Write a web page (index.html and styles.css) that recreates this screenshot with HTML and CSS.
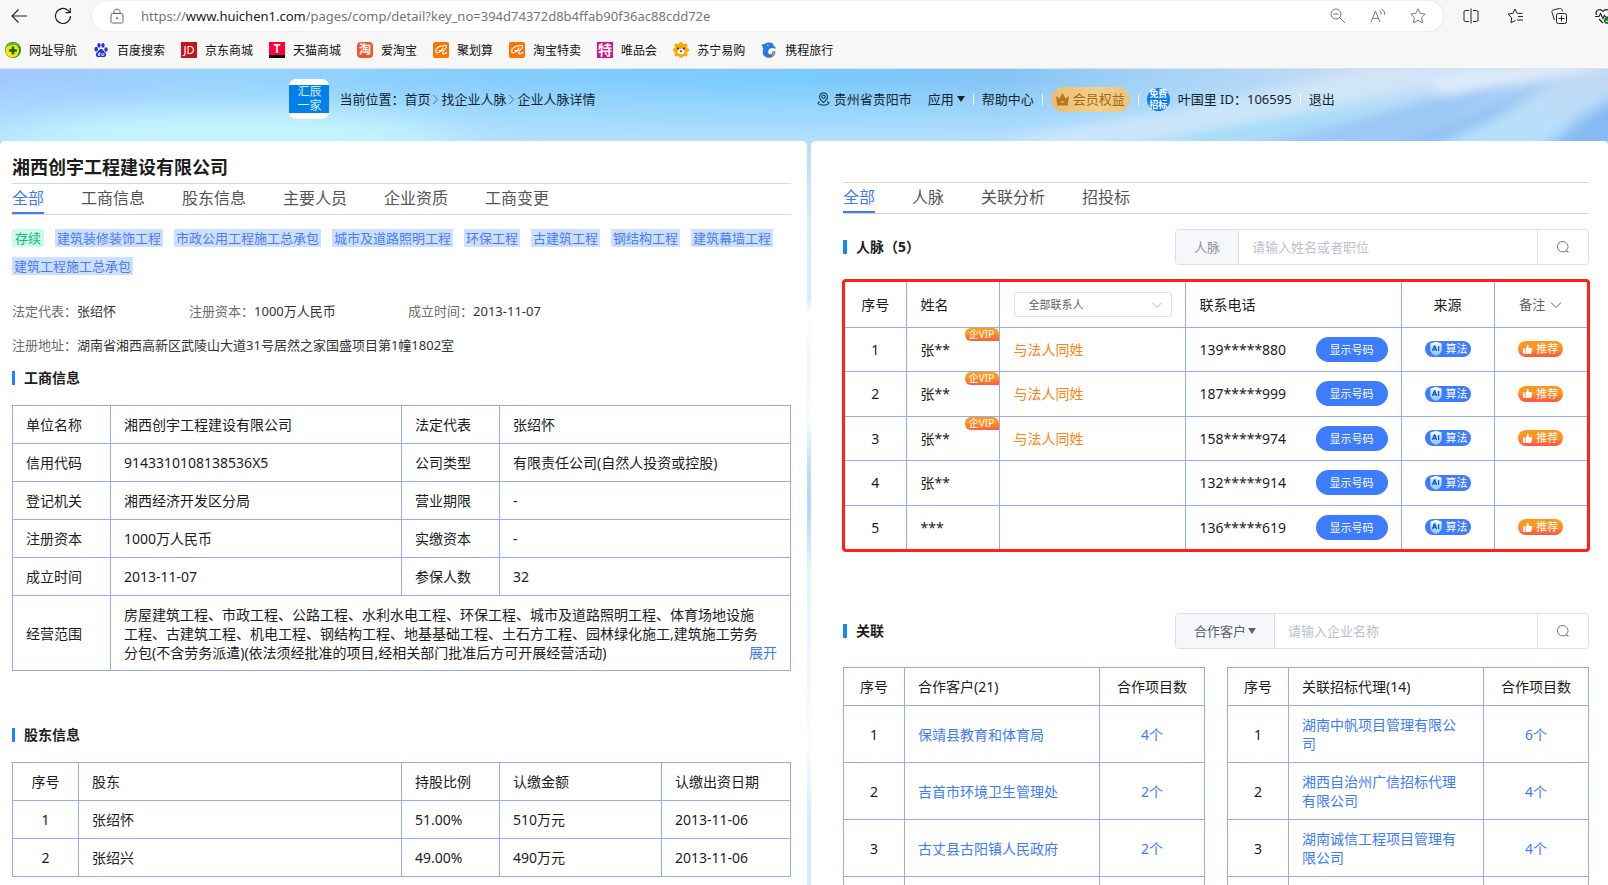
FILE: index.html
```html
<!DOCTYPE html>
<html lang="zh-CN">
<head>
<meta charset="utf-8">
<title>企业人脉详情</title>
<link rel="stylesheet" href="styles.css">
</head>
<body>
<svg class="defs" aria-hidden="true">
  <defs>
    <linearGradient id="shield" x1="0" y1="0" x2="0" y2="1"><stop offset="0" stop-color="#ffffff"/><stop offset="1" stop-color="#7fc6ff"/></linearGradient>
  </defs>
  <symbol id="i-chevron" viewBox="0 0 12 12"><path d="M1 3.5l5 5 5-5" fill="none" stroke="currentColor"/></symbol>
  <symbol id="i-search" viewBox="0 0 14 14"><circle cx="6.7" cy="6.7" r="5.3" fill="none" stroke="currentColor"/><path d="M10 11.6h2.4M10.4 10.4l1.8 1.8" fill="none" stroke="currentColor"/></symbol>
  <symbol id="i-thumb" viewBox="0 0 12 12"><path d="M1 5h2v6H1zM3.8 5.2C5.2 4.400 5.400 3 5.500 1.200 5.800.4 7.400.6 7.500 2c0 .9-.2 1.700-.5 2.400h3.200c.9 0 1.200.7 1 1.400l-1 4.200c-.2.700-.6 1-1.200 1H3.800z" fill="#fff"/></symbol>
  <symbol id="i-shield" viewBox="0 0 14 16"><path d="M7 .8l5.600 1.700v6.200c0 3.200-2.700 5.200-5.600 6.300-2.900-1.100-5.600-3.100-5.600-6.300V2.500z" fill="url(#shield)"/><path d="M3.500 10l1.800-5h.6l1.700 5M4.300 8.500h2.500M9.600 5v5" fill="none" stroke="#1d55d8" stroke-width="1.300"/></symbol>
  <symbol id="i-ali" viewBox="0 0 16 16"><rect width="16" height="16" rx="2" fill="#ff7300"/><path d="M9.800 3.800C6 3.800 2.800 6.400 2.500 9c-.2 2.800 4.200 2.200 6.800-1.200M6 8.600c1.600.3 3.700-1.200 3.800-2.600M9.800 3.800c2.400-.9 4.200-.3 3.600 1.200-.8 2-3.900 3.600-3.700 5.800.2 1.500 2.300 1.200 3.900-.3" fill="none" stroke="#fff" stroke-width="1.200" stroke-linecap="round"/></symbol>
</svg>
<div class="app">
  <header class="browser">
    <div class="toolbar">
      <button class="tool" aria-label="后退"><svg width="18" height="18" viewBox="0 0 18 18"><path d="M17 9H2M8.500 2.500L2 9l6.500 6.500" fill="none" stroke="#222" stroke-width="1.100"/></svg></button>
      <button class="tool reload" aria-label="刷新"><svg width="18" height="18" viewBox="0 0 18 18"><path d="M16.500 9A7.500 7.500 0 1 1 14 3.400L16 5.500M16.300 1v4.700h-4.800" fill="none" stroke="#222" stroke-width="1.200"/></svg></button>
      <div class="address">
        <svg width="14" height="16" viewBox="0 0 14 16"><rect x="1" y="5.500" width="12" height="9.500" rx="1.500" fill="none" stroke="#666"/><path d="M4 5.500V3.800C4 .3 10 .3 10 3.800v1.700" fill="none" stroke="#666"/><circle cx="7" cy="10.300" r="1" fill="#666"/></svg>
        <div class="url">https://<span class="host">www.huichen1.com</span>/pages/comp/detail?key_no=394d74372d8b4ffab90f36ac88cdd72e</div>
        <button class="tool dim" aria-label="缩小"><svg width="16" height="16" viewBox="0 0 16 16"><path d="M10 10l5 5M3.500 6h5" stroke="currentColor"/><circle cx="6" cy="6" r="5" fill="none" stroke="currentColor"/></svg></button>
        <button class="tool dim" aria-label="朗读"><svg width="16" height="16" viewBox="0 0 16 16"><path d="M1 14L5.500 3 10 14M2.500 10.300h6M9.500 2.500c1.300.7 1.900 2 1.600 4M11.500 1c2.500 1.300 3.500 3.500 3 6" fill="none" stroke="currentColor"/></svg></button>
        <button class="tool dim" aria-label="收藏此页"><svg width="16" height="16" viewBox="0 0 16 16"><path d="M8 .8l2.200 4.600 5 .7-3.600 3.500.9 5.100L8 12.300l-4.500 2.400.9-5.100L.8 6.100l5-.7z" fill="none" stroke="currentColor"/></svg></button>
      </div>
      <div class="tools">
        <button class="tool" aria-label="分屏"><svg width="16" height="16" viewBox="0 0 16 16"><path d="M6 2.500H2.500A1.500 1.500 0 0 0 1 4v8a1.500 1.500 0 0 0 1.500 1.500H6M8 .5v15M10 2.500h3.500A1.500 1.500 0 0 1 15 4v8a1.500 1.500 0 0 1-1.500 1.500H10" fill="none" stroke="#222"/></svg></button>
        <button class="tool" aria-label="收藏夹"><svg width="16" height="16" viewBox="0 0 16 16"><path d="M8.500 12.500L4 14.700l.7-4.900L1 6.100l4.900-.7L8 1l2.200 4.400H15.500M11 8.500h5M10 12h6" fill="none" stroke="#222"/></svg></button>
        <button class="tool" aria-label="集锦"><svg width="16" height="16" viewBox="0 0 16 16"><rect x="5.500" y="5.500" width="10" height="10" rx="2" fill="none" stroke="#222"/><path d="M10.500 7.500v6M7.500 10.500h6M3.500 12L1 4.500C.5 3 1 2.300 2.500 1.900l6-1.400c1.500-.3 2.200.2 2.600 1.600l.4 1.400" fill="none" stroke="#222"/></svg></button>
        <button class="tool" aria-label="浏览器概要"><svg width="16" height="16" viewBox="0 0 16 16"><path d="M1.500 7C-.5 2.500 5-.5 8 3.500c3-4 8.500-1 6.500 3.500M0 8.500h4l1.500-3 2.500 5 1.500-3 1 1.500h3M4 11l4 4" fill="none" stroke="#222" stroke-width="1.200"/><circle cx="12.500" cy="12.500" r="3.500" fill="#16811b"/><path d="M10.700 12.500l1.400 1.400 2.400-2.700" fill="none" stroke="#fff"/></svg></button>
      </div>
    </div>
    <nav class="bookmarks">
      <a href="#"><svg viewBox="0 0 16 16"><circle cx="8" cy="8" r="8" fill="#158b21"/><circle cx="7.300" cy="8.600" r="6.800" fill="#ffe600"/><path d="M2 4C5-1 13 0 15 5L10 3z" fill="#5fc425"/><path d="M8 4.500v8M4 8.500h8" stroke="#14681b" stroke-width="2.600"/></svg>网址导航</a>
      <a href="#"><svg viewBox="0 0 16 16"><rect width="16" height="16" fill="#fff"/><g fill="#2932e1"><ellipse cx="3.200" cy="7.200" rx="1.800" ry="2.400"/><ellipse cx="6" cy="3.400" rx="1.700" ry="2.400"/><ellipse cx="10" cy="3.400" rx="1.700" ry="2.400"/><ellipse cx="13" cy="7.500" rx="1.700" ry="2.300"/><path d="M8 7c2 0 2.500 2 4 3.300 2.200 2 1 5-1.500 4.900-1.700-.2-3.200-.2-5 0C3 15.400 1.700 12.300 4 10.300 5.500 9 6 7 8 7z"/></g><path d="M6.800 10v3.400H5.300V11.500h1.500M8.800 11v2.400h2V11" fill="none" stroke="#fff" stroke-width=".8"/></svg>百度搜索</a>
      <a href="#"><span class="fav fav-jd">JD</span>京东商城</a>
      <a href="#"><span class="fav fav-tm">T</span>天猫商城</a>
      <a href="#"><span class="fav fav-tao">淘</span>爱淘宝</a>
      <a href="#"><svg><use href="#i-ali"/></svg>聚划算</a>
      <a href="#"><svg><use href="#i-ali"/></svg>淘宝特卖</a>
      <a href="#"><span class="fav fav-te">特</span>唯品会</a>
      <a href="#"><svg viewBox="0 0 16 16"><g fill="#ffa800"><circle cx="8" cy="8" r="6.500"/><circle cx="8" cy="2" r="2"/><circle cx="3.500" cy="3.500" r="2"/><circle cx="12.500" cy="3.500" r="2"/><circle cx="2" cy="8" r="2"/><circle cx="14" cy="8" r="2"/><circle cx="3.500" cy="12.500" r="2"/><circle cx="12.500" cy="12.500" r="2"/><circle cx="8" cy="14" r="2"/></g><ellipse cx="8" cy="9.500" rx="3.600" ry="2.700" fill="#fff"/><circle cx="5" cy="6.500" r="1" fill="#222"/><circle cx="11" cy="6.500" r="1" fill="#222"/><path d="M6.500 8.500h3L8 10.500z" fill="#222"/></svg>苏宁易购</a>
      <a href="#"><svg viewBox="0 0 16 16"><path d="M.5 2.500C3 3 4 .5 8.500.5c3 0 4.500 1.800 4.200 3.700 1.600.3 2.300 1.600 1.800 2.800C12.500 5.500 9.500 6 8 7.500c-1.500 1.700-1 4 .5 4.700 1.700.6 3-.7 2.700-2.700l3-.5c.8 4-2.200 6.800-6.200 6.800C3 15.800.3 11.500 2.300 6.500z" fill="#2a78dc"/><path d="M12.800 8.500c2 2.700.2 6-2.800 6.200 1.800-1.700 1.500-3.200 2.800-6.200z" fill="#ff9a14"/><circle cx="7" cy="3.500" r=".7" fill="#fff"/></svg>携程旅行</a>
    </nav>
  </header>

  <div class="site">
    <header class="banner">
      <svg class="sky" viewBox="0 0 1608 72" preserveAspectRatio="none" aria-hidden="true">
        <defs>
          <linearGradient id="sky" x1="0" x2="1" y1="0" y2="0"><stop offset="0" stop-color="#a2c8ff"/><stop offset=".14" stop-color="#98d4ff"/><stop offset=".3" stop-color="#86cdff"/><stop offset=".5" stop-color="#7acbff"/><stop offset=".62" stop-color="#84c4f5"/><stop offset=".72" stop-color="#a4d2f6"/><stop offset=".84" stop-color="#c6dcf4"/><stop offset="1" stop-color="#bfd8f5"/></linearGradient>
          <linearGradient id="low" x1="0" x2="0" y1="0" y2="1"><stop offset=".15" stop-color="#b4e4ff" stop-opacity="0"/><stop offset="1" stop-color="#b4e0ff"/></linearGradient>
          <filter id="soft" x="-20%" y="-50%" width="140%" height="200%"><feGaussianBlur stdDeviation="9 5"/></filter>
          <filter id="wide" x="-30%" y="-100%" width="160%" height="300%"><feGaussianBlur stdDeviation="40 12"/></filter>
        </defs>
        <rect width="1608" height="72" fill="url(#sky)"/>
        <rect width="1608" height="72" fill="url(#low)"/>
        <ellipse cx="230" cy="68" rx="220" ry="26" fill="#c4f4ff" filter="url(#wide)"/>
        <g filter="url(#soft)">
          <path d="M1090 80L1290 48 1520 -5 1400 -8 1180 40 1000 70z" fill="#d6e8fa" opacity=".7"/>
          <path d="M1180 66L1330 40 1420 20 1300 62 1200 80z" fill="#a6dcf8"/>
          <path d="M1230 82L1340 54 1560 -6 1480 36 1400 82z" fill="#9cc8f5"/>
          <path d="M1400 80L1460 50 1560 4 1500 46 1420 84z" fill="#8fc1f2"/>
          <path d="M1430 10L1560 -8 1608 0 1540 10 1440 28z" fill="#dcebfa"/>
          <path d="M1540 84L1580 50 1630 20 1630 84z" fill="#86baf3"/>
        </g>
      </svg>
      <div class="crumb-side">
        <span class="logo"><span>汇辰<br>一家</span></span>
        <nav class="crumbs">当前位置：<a href="#">首页</a><svg><use href="#i-chevron"/></svg><a href="#">找企业人脉</a><svg><use href="#i-chevron"/></svg><a href="#">企业人脉详情</a></nav>
      </div>
      <div class="user-side">
        <a class="place" href="#"><svg width="13" height="14" viewBox="0 0 13 14" fill="none" stroke="#24485f" stroke-width="1.200"><path d="M6.500 10.500C4 8.500 2.500 7 2.500 4.800a4 4 0 0 1 8 0c0 2.200-1.500 3.700-4 5.700z"/><circle cx="6.500" cy="4.800" r="1.700"/><path d="M3 9.500c-4 1.500-1 3.700 3.500 3.700s7.500-2.200 3.500-3.700"/></svg>贵州省贵阳市</a>
        <button class="apps">应用<i class="caret"></i></button>
        <i class="bar"></i>
        <a href="#">帮助中心</a>
        <i class="bar"></i>
        <a class="vip" href="#"><svg width="13" height="13" viewBox="0 0 13 13"><path d="M0 3l3.500 2.500L6.500 0l3 5.500L13 3l-1.200 9.500H1.200z" fill="#bb771b"/><path d="M5 8l1.500 2L8 8" fill="none" stroke="#efc983"/></svg>会员权益</a>
        <i class="bar"></i>
        <span class="user"><span class="avatar">免费<br>招标</span>叶国里 ID：106595</span>
        <i class="bar"></i>
        <a href="#">退出</a>
      </div>
    </header>

    <main class="panels">
      <section class="panel company">
        <h1>湘西创宇工程建设有限公司</h1>
        <nav class="tabs"><button class="on">全部</button><button>工商信息</button><button>股东信息</button><button>主要人员</button><button>企业资质</button><button>工商变更</button></nav>
        <div class="tags"><span class="ok">存续</span><span>建筑装修装饰工程</span><span>市政公用工程施工总承包</span><span>城市及道路照明工程</span><span>环保工程</span><span>古建筑工程</span><span>钢结构工程</span><span>建筑幕墙工程</span><span>建筑工程施工总承包</span></div>
        <div class="facts">
          <p><span>法定代表：</span>张绍怀</p><p><span>注册资本：</span>1000万人民币</p><p><span>成立时间：</span>2013-11-07</p>
          <p class="wide"><span>注册地址：</span>湖南省湘西高新区武陵山大道31号居然之家国盛项目第1幢1802室</p>
        </div>
        <h2>工商信息</h2>
        <table class="grid">
          <colgroup><col class="c-label"><col><col class="c-label"><col></colgroup>
          <tr><th>单位名称</th><td>湘西创宇工程建设有限公司</td><th>法定代表</th><td>张绍怀</td></tr>
          <tr><th>信用代码</th><td>9143310108138536X5</td><th>公司类型</th><td>有限责任公司(自然人投资或控股)</td></tr>
          <tr><th>登记机关</th><td>湘西经济开发区分局</td><th>营业期限</th><td>-</td></tr>
          <tr><th>注册资本</th><td>1000万人民币</td><th>实缴资本</th><td>-</td></tr>
          <tr><th>成立时间</th><td>2013-11-07</td><th>参保人数</th><td>32</td></tr>
          <tr><th>经营范围</th><td colspan="3" class="scope"><div>房屋建筑工程、市政工程、公路工程、水利水电工程、环保工程、城市及道路照明工程、体育场地设施<br>工程、古建筑工程、机电工程、钢结构工程、地基基础工程、土石方工程、园林绿化施工,建筑施工劳务<br>分包(不含劳务派遣)(依法须经批准的项目,经相关部门批准后方可开展经营活动)<button class="more">展开</button></div></td></tr>
        </table>
        <h2 class="later">股东信息</h2>
        <table class="grid">
          <colgroup><col class="c-no"><col><col class="c-label"><col class="c-amount"><col class="c-date"></colgroup>
          <tr><th class="mid">序号</th><th>股东</th><th>持股比例</th><th>认缴金额</th><th>认缴出资日期</th></tr>
          <tr><td class="mid">1</td><td>张绍怀</td><td>51.00%</td><td>510万元</td><td>2013-11-06</td></tr>
          <tr><td class="mid">2</td><td>张绍兴</td><td>49.00%</td><td>490万元</td><td>2013-11-06</td></tr>
        </table>
      </section>

      <section class="panel people">
        <nav class="tabs"><button class="on">全部</button><button>人脉</button><button>关联分析</button><button>招投标</button></nav>
        <div class="head">
          <h2>人脉（5）</h2>
          <form class="search"><label for="q1" class="pre">人脉</label><input id="q1" type="text" placeholder="请输入姓名或者职位"><button type="button" aria-label="搜索"><svg><use href="#i-search"/></svg></button></form>
        </div>
        <div class="frame">
          <table class="grid contacts">
            <colgroup><col class="k-no"><col class="k-name"><col class="k-rel"><col><col class="k-src"><col class="k-src"></colgroup>
            <tr><th class="mid">序号</th><th>姓名</th><th><span class="pick"><select aria-label="联系人筛选"><option>全部联系人</option></select><svg><use href="#i-chevron"/></svg></span></th><th>联系电话</th><th class="mid">来源</th><th class="mid"><button class="note">备注<svg><use href="#i-chevron"/></svg></button></th></tr>
            <tr><td class="mid">1</td><td class="name">张**<span class="qvip">企VIP</span></td><td class="same">与法人同姓</td><td><div class="tel">139*****880<button>显示号码</button></div></td><td class="mid"><span class="algo"><svg><use href="#i-shield"/></svg>算法</span></td><td class="mid"><span class="rec"><svg><use href="#i-thumb"/></svg>推荐</span></td></tr>
            <tr><td class="mid">2</td><td class="name">张**<span class="qvip">企VIP</span></td><td class="same">与法人同姓</td><td><div class="tel">187*****999<button>显示号码</button></div></td><td class="mid"><span class="algo"><svg><use href="#i-shield"/></svg>算法</span></td><td class="mid"><span class="rec"><svg><use href="#i-thumb"/></svg>推荐</span></td></tr>
            <tr><td class="mid">3</td><td class="name">张**<span class="qvip">企VIP</span></td><td class="same">与法人同姓</td><td><div class="tel">158*****974<button>显示号码</button></div></td><td class="mid"><span class="algo"><svg><use href="#i-shield"/></svg>算法</span></td><td class="mid"><span class="rec"><svg><use href="#i-thumb"/></svg>推荐</span></td></tr>
            <tr><td class="mid">4</td><td class="name">张**</td><td></td><td><div class="tel">132*****914<button>显示号码</button></div></td><td class="mid"><span class="algo"><svg><use href="#i-shield"/></svg>算法</span></td><td></td></tr>
            <tr><td class="mid">5</td><td class="name">***</td><td></td><td><div class="tel">136*****619<button>显示号码</button></div></td><td class="mid"><span class="algo"><svg><use href="#i-shield"/></svg>算法</span></td><td class="mid"><span class="rec"><svg><use href="#i-thumb"/></svg>推荐</span></td></tr>
          </table>
        </div>
        <div class="head second">
          <h2>关联</h2>
          <form class="search"><button type="button" class="pre dark">合作客户<i class="caret"></i></button><input type="text" aria-label="企业名称" placeholder="请输入企业名称"><button type="button" aria-label="搜索"><svg><use href="#i-search"/></svg></button></form>
        </div>
        <div class="pair">
          <table class="grid related">
            <colgroup><col class="r-no"><col><col class="r-count"></colgroup>
            <tr><th class="mid">序号</th><th>合作客户(21)</th><th class="mid">合作项目数</th></tr>
            <tr><td class="mid">1</td><td><a href="#">保靖县教育和体育局</a></td><td class="mid"><a href="#">4个</a></td></tr>
            <tr><td class="mid">2</td><td><a href="#">吉首市环境卫生管理处</a></td><td class="mid"><a href="#">2个</a></td></tr>
            <tr><td class="mid">3</td><td><a href="#">古丈县古阳镇人民政府</a></td><td class="mid"><a href="#">2个</a></td></tr>
            <tr><td></td><td></td><td></td></tr>
          </table>
          <table class="grid related">
            <colgroup><col class="r-no"><col><col class="r-count"></colgroup>
            <tr><th class="mid">序号</th><th>关联招标代理(14)</th><th class="mid">合作项目数</th></tr>
            <tr><td class="mid">1</td><td><a href="#">湖南中帆项目管理有限公司</a></td><td class="mid"><a href="#">6个</a></td></tr>
            <tr><td class="mid">2</td><td><a href="#">湘西自治州广信招标代理有限公司</a></td><td class="mid"><a href="#">4个</a></td></tr>
            <tr><td class="mid">3</td><td><a href="#">湖南诚信工程项目管理有限公司</a></td><td class="mid"><a href="#">4个</a></td></tr>
            <tr><td></td><td></td><td></td></tr>
          </table>
        </div>
      </section>
    </main>
  </div>
</div>
</body>
</html>
```

FILE: styles.css
```css
* { box-sizing: border-box; }
body { margin: 0; font: 14px/19px "Noto Sans", "Noto Sans CJK SC", sans-serif; color: #1c1c1c; }
button, input, select { font: inherit; color: inherit; }
button { border: 0; padding: 0; background: none; cursor: pointer; }
a { color: inherit; text-decoration: none; }
h1, h2, p { margin: 0; }
svg { flex: none; }
.defs { position: absolute; width: 0; height: 0; }
.app { height: 100vh; overflow: hidden; display: flex; flex-direction: column; }

/* Browser bar */
.browser { background: #f7f7f7; border-bottom: 1px solid #e2e2e2; flex: none; }
.toolbar { display: flex; align-items: center; gap: 20px; height: 32px; padding-left: 10px; overflow: hidden; }
.tool { display: flex; flex: none; }
.reload { margin-left: 6px; }
.dim { color: #777; }
.address { flex: 1; min-width: 0; display: flex; align-items: center; gap: 24px; height: 30px; padding: 0 17px 0 18px; border-radius: 15px; background: #fff; box-shadow: 0 0 3px #ddd; }
.url { flex: 1; margin-left: -7px; font-size: 13px; color: #757575; white-space: nowrap; overflow: hidden; }
.host { color: #1a1a1a; }
.tools { display: flex; gap: 28px; flex: none; margin-right: -3px; }
.bookmarks { display: flex; gap: 16px; height: 36px; padding: 0 5px; align-items: center; font-size: 12px; color: #111; }
.bookmarks a { display: flex; align-items: center; gap: 8px; white-space: nowrap; }
.bookmarks svg { width: 16px; height: 16px; }
.fav { width: 16px; height: 16px; line-height: 16px; text-align: center; color: #fff; }
.fav-jd { background: #c5151c; font-size: 11px; }
.fav-tm { background: #ff0036; border-bottom: 3px solid #000; font-weight: 700; line-height: 13px; }
.fav-tao { background: #f0562a; border-radius: 4px; font-weight: 700; }
.fav-te { background: #d8108c; font-weight: 700; font-size: 14px; }

/* Page background and banner */
.site { flex: 1; min-height: 0; display: flex; flex-direction: column; background: linear-gradient(180deg, #aedcff 0, #b4defe 80px, #dceaff 150px, #d4edff 230px, #fff 245px, #eef6ff 290px, #f6fcff 350px, #bcdcff 400px, #b5d4ff 440px, #dcf6ff 500px, #f0f4ff 580px, #fafcff 680px, #d4eaff 750px); }
.banner { position: relative; z-index: 0; flex: none; height: 72px; display: flex; align-items: center; justify-content: space-between; padding: 0 17% 12px 18%; font-size: 13px; color: #14242e; white-space: nowrap; }
.sky { position: absolute; z-index: -1; inset: 0; width: 100%; height: 100%; }
.crumb-side, .user-side, .crumbs, .place, .user, .vip, .apps { display: flex; align-items: center; }
.logo { display: flex; align-items: center; width: 40px; height: 40px; margin-right: 10px; border-radius: 7px; background: #fff; }
.logo span { width: 40px; background: #0080e8; color: #d9f1ff; text-align: center; font-size: 12px; line-height: 14px; }
.crumbs svg { width: 11px; height: 11px; transform: rotate(-90deg); color: #45657c; }
.user-side { gap: 8px; }
.place { gap: 4px; }
.apps { gap: 3px; margin-left: 8px; }
.caret { border: 4px solid transparent; border-top: 6px solid currentColor; border-bottom: 0; }
.bar { width: 1px; height: 11px; background: #fff; }
.vip { gap: 4px; height: 25px; padding: 0 5px; border-radius: 13px; background: linear-gradient(90deg, #e9bd72, #f3d08d 60%, #ecc27b); color: #a5690f; }
.user { gap: 8px; }
.avatar { display: grid; place-content: center; width: 23px; height: 23px; border-radius: 50%; background: #087cff; color: #fff; font-size: 9px; line-height: 11px; font-weight: 700; }

/* Panels */
.panels { flex: 1; min-height: 0; display: grid; grid-template-columns: 807fr 797fr; gap: 4px; }
.panel { min-width: 0; background: #fff; border-radius: 5px 5px 0 0; overflow: hidden; }
.company { padding: 11px 16px 0 12px; }
.people { padding: 41px 19px 0 32px; }
h1 { font-size: 18px; line-height: 31px; font-weight: 700; }
.tabs { display: flex; gap: 37px; height: 32px; border: solid #d8d8d8; border-width: 1px 0; font-size: 16px; color: #555; }
.tabs button { height: 30px; padding-top: 1px; border-bottom: 2px solid transparent; white-space: nowrap; }
.tabs .on { color: #3d7bff; border-color: #3d7bff; }
.tags { display: flex; flex-wrap: wrap; gap: 10px 11px; margin-top: 14px; font-size: 13px; line-height: 18px; color: #4a7bff; }
.tags span { padding: 0 2px; background: #cde0ff; }
.tags .ok { padding: 0 3px; background: #ccfbe8; color: #12b878; }
.facts { display: grid; grid-template-columns: 177px 219px 1fr; gap: 14px 0; margin-top: 26px; font-size: 13px; line-height: 20px; color: #333; }
.facts span { color: #6c6c6c; }
.wide { grid-column: 1 / -1; }
h2 { display: flex; align-items: center; gap: 9px; font-size: 14px; line-height: 20px; font-weight: 700; white-space: nowrap; }
h2::before { content: ""; width: 3px; height: 14px; background: #1488ff; }
.company h2 { margin: 13px 0 17px; }
.company .later { margin-top: 54px; }
.people h2::before { width: 4px; }

/* Tables */
.grid { width: 100%; table-layout: fixed; border-collapse: collapse; }
.grid th, .grid td { height: 38px; padding: 0 13px; border: 1px solid #96abf5; text-align: left; font-weight: 400; }
.grid .mid { padding: 0; text-align: center; }
.grid a, .more { color: #3d7bff; }
.c-label { width: 98px; }
.c-no { width: 66px; }
.c-amount { width: 162px; }
.c-date { width: 129px; }
.grid .scope { height: 75px; white-space: nowrap; }
.scope div { position: relative; }
.more { position: absolute; right: 0; bottom: 0; }

.head { display: flex; align-items: center; justify-content: space-between; margin-top: 15px; }
.second { margin: 61px 0 18px; }
.search { display: flex; width: 414px; height: 36px; border: 1px solid #dcdfe6; border-radius: 4px; overflow: hidden; font-size: 13px; }
.search .pre { display: flex; align-items: center; gap: 2px; padding: 0 18px; border-right: 1px solid #dcdfe6; background: #f5f7fa; color: #909399; white-space: nowrap; }
.search .dark { color: #606266; }
.search input { flex: 1; min-width: 0; border: 0; padding: 0 13px; outline: 0; background: #fff; }
.search input::placeholder { color: #bcc1ca; }
.search > button:last-child { display: grid; place-content: center; width: 51px; border-left: 1px solid #dcdfe6; color: #777; }
.search > button svg { width: 14px; height: 14px; }

.frame { margin: 14px -1px 0; border: 3px solid #ff2117; border-radius: 4px; }
.contacts { border-style: hidden; }
.contacts th { height: 45px; }
.contacts td { height: 44px; }
.contacts tr:nth-child(odd) td { height: 45px; }
.contacts th:nth-child(-n+4), .contacts td:nth-child(-n+4) { padding-left: 14px; }
.contacts .mid:first-child { padding-left: 0; }
.k-no { width: 61px; }
.k-name { width: 93px; }
.k-rel { width: 186px; }
.k-src { width: 93px; }
.name { position: relative; }
.qvip { position: absolute; top: 0; right: 0; width: 34px; height: 13px; border-radius: 6px 6px 0 6px; background: linear-gradient(#ff9a1f 40%, #ff5a3c); color: #fff; font-size: 10px; line-height: 13px; text-align: center; }
.contacts .same { color: #ff8412; }
.pick { position: relative; display: block; }
.pick select { display: block; width: 100%; height: 25px; padding: 0 14px; appearance: none; border: 1px solid #dcdfe6; border-radius: 3px; background: #fff; color: #606266; font-size: 11px; }
.pick svg { position: absolute; right: 9px; top: 7px; width: 12px; height: 12px; color: #b5bac4; }
.tel { display: flex; align-items: center; justify-content: space-between; }
.tel button { width: 72px; height: 25px; border-radius: 13px; background: #3d7bff; color: #fff; font-size: 11px; }
.note { display: inline-flex; align-items: center; gap: 5px; font-size: 13px; color: #606266; }
.note svg { width: 12px; height: 12px; }
.algo, .rec { display: flex; align-items: center; margin: 0 auto; height: 16px; border-radius: 8px; color: #fff; font-size: 11px; line-height: 16px; }
.algo { width: 46px; gap: 3px; padding-left: 4px; background: #3d7bff; }
.algo svg { width: 14px; height: 16px; }
.rec { width: 45px; gap: 3px; padding-left: 4px; background: linear-gradient(#ff961f 45%, #ff5246); }
.rec svg { width: 11px; height: 11px; }

.pair { display: grid; grid-template-columns: 1fr 1fr; gap: 22px; align-items: start; }
.related td { height: 57px; }
.related td:nth-child(2) { padding-right: 20px; }
.r-no { width: 61px; }
.r-count { width: 105px; }
```
